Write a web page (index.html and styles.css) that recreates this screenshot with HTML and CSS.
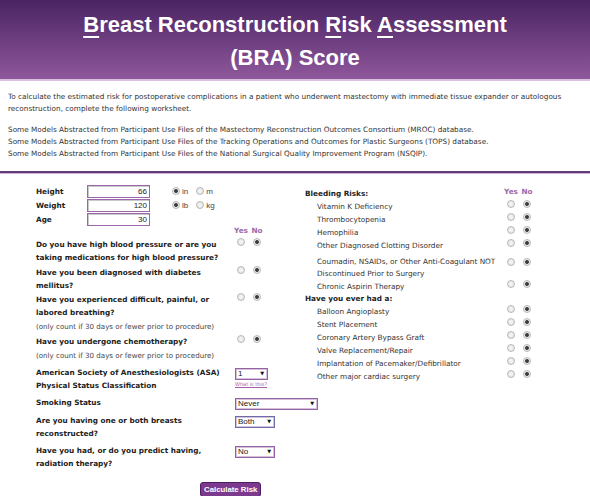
FILE: index.html
```html
<!DOCTYPE html>
<html lang="en">
<head>
  <meta charset="UTF-8" />
  <meta name="viewport" content="width=device-width, initial-scale=1.0"/>
  <title>Breast Reconstruction Risk Assessment (BRA) Score</title>
  <link rel="stylesheet" href="styles.css">
</head>
<body>
  <header class="banner">
    <h1><u>B</u>reast Reconstruction <u>R</u>isk <u>A</u>ssessment<br>(BRA) Score</h1>
  </header>

  <section class="intro">
    <p>To calculate the estimated risk for postoperative complications in a patient who underwent mastectomy with immediate tissue expander or autologous reconstruction, complete the following worksheet.</p>
    <p>Some Models Abstracted from Participant Use Files of the Mastectomy Reconstruction Outcomes Consortium (MROC) database.<br>
    Some Models Abstracted from Participant Use Files of the Tracking Operations and Outcomes for Plastic Surgeons (TOPS) database.<br>
    Some Models Abstracted from Participant Use Files of the National Surgical Quality Improvement Program (NSQIP).</p>
  </section>

  <form class="worksheet" onsubmit="return false;">
    <div class="col col-left">
      <div class="measure">
        <label>Height</label>
        <input type="text" class="num" value="66">
        <span class="units"><input type="radio" name="hu" checked> in <input type="radio" name="hu"> m</span>
      </div>
      <div class="measure">
        <label>Weight</label>
        <input type="text" class="num" value="120">
        <span class="units"><input type="radio" name="wu" checked> lb <input type="radio" name="wu"> kg</span>
      </div>
      <div class="measure">
        <label>Age</label>
        <input type="text" class="num" value="30">
      </div>

      <div class="row yn-head"><span></span><span>Yes</span><span>No</span></div>
      <div class="row q first">
        <label>Do you have high blood pressure or are you taking medications for high blood pressure?</label>
        <input type="radio" name="q1"><input type="radio" name="q1" checked>
      </div>
      <div class="row q">
        <label>Have you been diagnosed with diabetes mellitus?</label>
        <input type="radio" name="q2"><input type="radio" name="q2" checked>
      </div>
      <div class="row q">
        <label>Have you experienced difficult, painful, or labored breathing?</label>
        <input type="radio" name="q3"><input type="radio" name="q3" checked>
      </div>
      <p class="note">(only count if 30 days or fewer prior to procedure)</p>
      <div class="row q">
        <label>Have you undergone chemotherapy?</label>
        <input type="radio" name="q4"><input type="radio" name="q4" checked>
      </div>
      <p class="note">(only count if 30 days or fewer prior to procedure)</p>

      <div class="sel-row asa">
        <label>American Society of Anesthesiologists (ASA) Physical Status Classification</label>
        <div>
          <span class="drop w-s"><select><option>1</option><option>2</option><option>3</option><option>4</option></select></span>
          <a href="#" class="help">What is this?</a>
        </div>
      </div>
      <div class="sel-row">
        <label>Smoking Status</label>
        <span class="drop w-l"><select><option>Never</option><option>Former</option><option>Current</option></select></span>
      </div>
      <div class="sel-row breasts">
        <label>Are you having one or both breasts reconstructed?</label>
        <span class="drop w-m blue"><select><option>Both</option><option>One</option></select></span>
      </div>
      <div class="sel-row">
        <label>Have you had, or do you predict having, radiation therapy?</label>
        <span class="drop w-m"><select><option>No</option><option>Yes</option></select></span>
      </div>
    </div>

    <div class="col col-right">
      <div class="row group-head"><strong>Bleeding Risks:</strong><span>Yes</span><span>No</span></div>
      <div class="row item"><label>Vitamin K Deficiency</label><input type="radio" name="b1"><input type="radio" name="b1" checked></div>
      <div class="row item"><label>Thrombocytopenia</label><input type="radio" name="b2"><input type="radio" name="b2" checked></div>
      <div class="row item"><label>Hemophilia</label><input type="radio" name="b3"><input type="radio" name="b3" checked></div>
      <div class="row item"><label>Other Diagnosed Clotting Disorder</label><input type="radio" name="b4"><input type="radio" name="b4" checked></div>
      <div class="row item tall"><label>Coumadin, NSAIDs, or Other Anti-Coagulant NOT Discontinued Prior to Surgery</label><input type="radio" name="b5"><input type="radio" name="b5" checked></div>
      <div class="row item"><label>Chronic Aspirin Therapy</label><input type="radio" name="b6"><input type="radio" name="b6" checked></div>

      <div class="row group-head"><strong>Have you ever had a:</strong></div>
      <div class="row item"><label>Balloon Angioplasty</label><input type="radio" name="c1"><input type="radio" name="c1" checked></div>
      <div class="row item"><label>Stent Placement</label><input type="radio" name="c2"><input type="radio" name="c2" checked></div>
      <div class="row item"><label>Coronary Artery Bypass Graft</label><input type="radio" name="c3"><input type="radio" name="c3" checked></div>
      <div class="row item"><label>Valve Replacement/Repair</label><input type="radio" name="c4"><input type="radio" name="c4" checked></div>
      <div class="row item"><label>Implantation of Pacemaker/Defibrillator</label><input type="radio" name="c5"><input type="radio" name="c5" checked></div>
      <div class="row item"><label>Other major cardiac surgery</label><input type="radio" name="c6"><input type="radio" name="c6" checked></div>
    </div>

    <div class="actions">
      <button type="submit">Calculate Risk</button>
    </div>
  </form>
</body>
</html>
```

FILE: styles.css
```css
body {
  margin: 0;
  font-family: "DejaVu Sans", Verdana, sans-serif;
  font-size: 7.3px;
  color: #333;
  background-color: white;
}

.banner {
  height: 79px;
  background: linear-gradient(to bottom, #4a2462, #8f579c);
  border-bottom: 2px solid #d9bfe0;
}

.banner h1 {
  margin: 0;
  padding-top: 8px;
  font-family: "Liberation Sans", Arial, sans-serif;
  font-size: 22px;
  line-height: 33px;
  color: white;
  text-align: center;
}

.banner u {
  text-decoration-thickness: 2px;
  text-underline-offset: 4px;
}

.intro {
  padding: 10px 8px 11px;
  border-bottom: 2px solid #653a78;
  box-shadow: 0 1px 0 #cdb0d6;
}

.intro p {
  margin: 0;
  line-height: 12px;
}

.intro p + p {
  margin-top: 9px;
}

.worksheet {
  display: grid;
  grid-template-columns: 269px 240px;
  align-items: start;
  padding: 11px 0 0 36px;
}

.measure {
  display: grid;
  grid-template-columns: 51px 85px auto;
  align-items: center;
  height: 14px;
}

.measure label,
.q label,
.sel-row label,
.group-head strong {
  font-weight: bold;
  color: #222;
}

.num {
  box-sizing: border-box;
  width: 63px;
  height: 13px;
  padding: 0 2px;
  border: 1px solid #9c67aa;
  box-shadow: inset 1px 1px 0 #c9c9c9;
  font-family: "Liberation Sans", Arial, sans-serif;
  font-size: 8px;
  text-align: right;
  color: #222;
}

.units {
  display: flex;
  align-items: center;
  gap: 2px;
  font-family: "Liberation Sans", Arial, sans-serif;
  font-size: 8px;
  color: #444;
}

.units input + input {
  margin-left: 6px;
}

.row {
  display: grid;
  grid-template-columns: 197px 16px 16px;
  align-items: start;
  justify-items: center;
  line-height: 13px;
}

.row label,
.row strong {
  justify-self: start;
}

.row input {
  margin-top: 2.5px;
}

.yn-head,
.group-head span {
  font-weight: bold;
  color: #9b68a8;
}

.yn-head {
  line-height: 10px;
}

.q {
  margin-top: 1.5px;
}

.q.first {
  margin-top: 2px;
}

.note {
  margin: 1px 0 0;
  font-size: 7.1px;
  line-height: 13px;
  color: #444;
}

.note + .q {
  margin-top: 2px;
}

.sel-row {
  display: grid;
  grid-template-columns: 199px auto;
  align-items: start;
  line-height: 13px;
  margin-top: 4px;
}

.drop {
  position: relative;
  display: block;
  margin-top: 1px;
}

.drop select {
  appearance: none;
  box-sizing: border-box;
  width: 100%;
  height: 12px;
  padding: 0 2px;
  border: 1px solid #9462a3;
  box-shadow: inset 0 0 0 1px #d6c2dc;
  border-radius: 0;
  background: white;
  font-family: "Liberation Sans", Arial, sans-serif;
  font-size: 8px;
  line-height: 10px;
  color: #222;
}

.drop::after {
  content: "\25BC";
  position: absolute;
  right: 4px;
  top: 2px;
  font-size: 5px;
  line-height: 8px;
  color: #111;
  pointer-events: none;
}

.drop.blue select {
  border-color: #6d6da6;
}

.w-s { width: 33px; }
.w-m { width: 40px; }
.w-l { width: 83px; }

.help {
  display: block;
  margin-top: 1px;
  font-size: 5px;
  line-height: 7px;
  color: #a25ea6;
}

.col-right {
  padding-top: 4px;
}

.col-right .row {
  grid-template-columns: 198px 16px 16px;
}

.group-head {
  line-height: 12px;
}

.group-head span {
  margin-top: -2px;
}

.item label {
  padding-left: 12px;
}

.item.tall {
  margin-top: 4px;
  line-height: 12px;
}

.item.tall input {
  margin-top: 2px;
}

input[type="radio"] {
  appearance: none;
  box-sizing: border-box;
  width: 8px;
  height: 8px;
  margin: 0;
  border: 1px solid #b9b9b9;
  border-radius: 50%;
  background: radial-gradient(circle, #f8f8f8, #dedede);
}

input[type="radio"]:checked {
  background: radial-gradient(circle, #3c3c3c 0 1.5px, #e9e9e9 2.3px);
}

.actions {
  grid-column: 1 / -1;
  padding: 12px 0 0 164px;
}

.actions button {
  height: 15px;
  padding: 0 3px;
  border: 1px solid #4f1d60;
  border-radius: 3px;
  background-color: #7c3a8e;
  font-family: "Liberation Sans", Arial, sans-serif;
  font-size: 7.8px;
  font-weight: bold;
  color: white;
  cursor: pointer;
}
```
